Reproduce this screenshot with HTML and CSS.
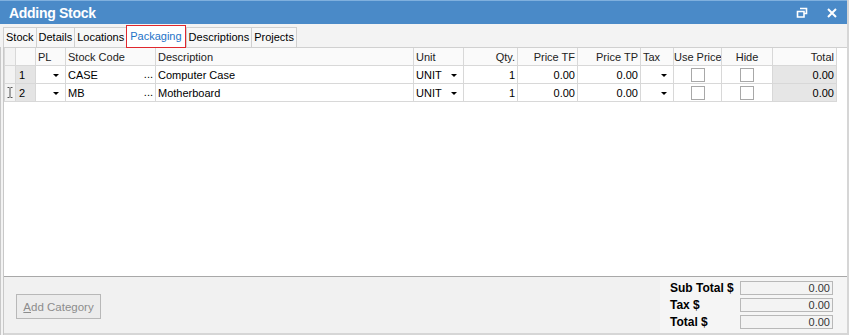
FILE: index.html
```html
<!DOCTYPE html>
<html lang="en">
<head>
    <meta charset="UTF-8">
    <title>Adding Stock</title>
    <link rel="stylesheet" href="styles.css">
</head>
<body>
    <div class="window">
        <div class="titlebar">
            <span class="title">Adding Stock</span>
            <span class="win-btn">
                <svg width="12" height="12" viewBox="0 0 12 12"><path d="M4 1.5h6.5v5H8.5M1.5 4.5h6.5v5.5H1.5z" fill="none" stroke="#fff" stroke-width="1.6"/></svg>
            </span>
            <span class="win-btn">
                <svg width="12" height="12" viewBox="0 0 12 12"><path d="M2 2l8 8M10 2l-8 8" stroke="#fff" stroke-width="2"/></svg>
            </span>
        </div>

        <div class="tabs">
            <div class="tab">Stock</div>
            <div class="tab">Details</div>
            <div class="tab">Locations</div>
            <div class="tab active">Packaging</div>
            <div class="tab">Descriptions</div>
            <div class="tab">Projects</div>
        </div>

        <div class="body">
            <div class="grid-area">
                <table class="grid">
                    <colgroup>
                        <col style="width:11px"><col style="width:20px"><col style="width:30px"><col style="width:90px">
                        <col style="width:258px"><col style="width:50px"><col style="width:54px"><col style="width:60px">
                        <col style="width:63px"><col style="width:33px"><col style="width:48px"><col style="width:51px">
                        <col style="width:64px">
                    </colgroup>
                    <tr class="head">
                        <th class="ind"></th>
                        <th></th>
                        <th>PL</th>
                        <th>Stock Code</th>
                        <th>Description</th>
                        <th>Unit</th>
                        <th class="r">Qty.</th>
                        <th class="r">Price TF</th>
                        <th class="r">Price TP</th>
                        <th>Tax</th>
                        <th class="c">Use Price</th>
                        <th class="c">Hide</th>
                        <th class="r">Total</th>
                    </tr>
                    <tr>
                        <td class="ind"></td>
                        <td class="num">1</td>
                        <td class="drop"><span class="arrow"></span></td>
                        <td class="code">CASE<span class="dots">...</span></td>
                        <td>Computer Case</td>
                        <td class="drop">UNIT<span class="arrow"></span></td>
                        <td class="r">1</td>
                        <td class="r">0.00</td>
                        <td class="r">0.00</td>
                        <td class="drop"><span class="arrow"></span></td>
                        <td class="c"><span class="check"></span></td>
                        <td class="c"><span class="check"></span></td>
                        <td class="r total">0.00</td>
                    </tr>
                    <tr>
                        <td class="ind">
                            <svg width="6" height="11" viewBox="0 0 6 11"><path d="M0.5 0.5h2M3.5 0.5h2M3 1v9M0.5 10.5h2M3.5 10.5h2" stroke="#555" stroke-width="1" fill="none"/></svg>
                        </td>
                        <td class="num">2</td>
                        <td class="drop"><span class="arrow"></span></td>
                        <td class="code">MB<span class="dots">...</span></td>
                        <td>Motherboard</td>
                        <td class="drop">UNIT<span class="arrow"></span></td>
                        <td class="r">1</td>
                        <td class="r">0.00</td>
                        <td class="r">0.00</td>
                        <td class="drop"><span class="arrow"></span></td>
                        <td class="c"><span class="check"></span></td>
                        <td class="c"><span class="check"></span></td>
                        <td class="r total">0.00</td>
                    </tr>
                </table>
            </div>

            <div class="footer">
                <div class="footer-left">
                    <button class="btn" disabled><u>A</u>dd Category</button>
                </div>
                <div class="totals">
                    <div class="total-row"><span class="label">Sub Total $</span><span class="box">0.00</span></div>
                    <div class="total-row"><span class="label">Tax $</span><span class="box">0.00</span></div>
                    <div class="total-row"><span class="label">Total $</span><span class="box">0.00</span></div>
                </div>
            </div>
        </div>
    </div>
</body>
</html>
```

FILE: styles.css
```css
body {
    margin: 0;
    font-family: 'Liberation Sans', Arial, sans-serif;
    font-size: 11px;
    color: #000;
    background: #f3f3f3;
}
.window {
    width: 849px;
    height: 335px;
    display: flex;
    flex-direction: column;
    box-sizing: border-box;
    border-right: 2px solid #d6d6d6;
}
.titlebar {
    height: 24px;
    background: #4a8ac8;
    border-top: 1px solid #7fb0de;
    box-sizing: border-box;
    display: flex;
    align-items: center;
    padding: 0 0 0 9px;
    color: #fff;
}
.title {
    flex: 1;
    font-weight: bold;
    font-size: 14px;
    letter-spacing: -0.3px;
}
.win-btn {
    width: 30px;
    display: flex;
    justify-content: center;
}
.tabs {
    height: 23px;
    display: flex;
    align-items: flex-end;
    padding-left: 3px;
    background: #f3f3f3;
}
.tab {
    height: 19px;
    line-height: 19px;
    padding: 0 2px;
    border: 1px solid #d0d0d0;
    border-bottom: none;
    margin-right: -1px;
    background: #f7f7f7;
    font-size: 11px;
}
.tab.active {
    height: 21px;
    line-height: 20px;
    border: 1px solid #e0282e;
    margin-bottom: -1px;
    background: #fff;
    color: #1e73c8;
    position: relative;
    z-index: 1;
    padding: 0 3px;
    margin-right: 0;
}
.body {
    flex: 1;
    display: flex;
    flex-direction: column;
    border-left: 4px double #c8c8c8;
}
.grid-area {
    flex: 1;
    background: #fff;
    border-top: 1px solid #d0d0d0;
    border-bottom: 1px solid #a8a8a8;
}
.grid {
    border-collapse: collapse;
    table-layout: fixed;
    width: 832px;
}
.grid th, .grid td {
    height: 17px;
    padding: 0 2px;
    border: 1px solid #d8d8d8;
    white-space: nowrap;
    overflow: hidden;
    text-align: left;
    font-weight: normal;
    position: relative;
}
.grid tr:first-child th {
    border-top: none;
}
.grid th {
    background: #fafafa;
    color: #222;
}
.grid th.r, .grid td.r {
    text-align: right;
}
.grid th.c, .grid td.c {
    text-align: center;
    padding: 0;
}
.grid .ind {
    background: #f3f3f3;
    padding: 0;
    text-align: center;
}
.grid .ind svg {
    display: block;
    margin: 0 auto;
}
.grid td.num {
    background: #e4e4e4;
    padding-left: 3px;
}
.grid td.total {
    background: #e6e6e6;
}
.drop {
    padding-right: 12px;
}
.arrow {
    position: absolute;
    right: 6px;
    top: 8px;
    border-left: 3px solid transparent;
    border-right: 3px solid transparent;
    border-top: 3px solid #000;
}
.code .dots {
    position: absolute;
    right: 2px;
    top: 2px;
}
.check {
    display: inline-block;
    width: 12px;
    height: 12px;
    border: 1px solid #a8a8a8;
    background: #fff;
    vertical-align: middle;
}
.footer {
    height: 56px;
    display: flex;
    background: #f1f1f1;
    border-bottom: 2px solid #d6d6d6;
}
.footer-left {
    flex: 1;
    padding: 17px 0 0 12px;
}
.btn {
    width: 85px;
    height: 25px;
    border: 1px solid #b8b8b8;
    background: #ececec;
    color: #8c8c8c;
    font-family: 'Liberation Sans', Arial, sans-serif;
    font-size: 11.5px;
    padding: 0;
}
.totals {
    width: 177px;
    padding: 4px 0 0 10px;
    background: #f5f5f5;
    display: flex;
    flex-direction: column;
    gap: 3px;
}
.total-row {
    display: flex;
    align-items: center;
    height: 14px;
}
.label {
    width: 70px;
    font-weight: bold;
    font-size: 12px;
}
.box {
    width: 89px;
    height: 12px;
    line-height: 13px;
    border: 1px solid #b8b8b8;
    background: #f3f3f3;
    text-align: right;
    padding-right: 2px;
    color: #333;
}
```
